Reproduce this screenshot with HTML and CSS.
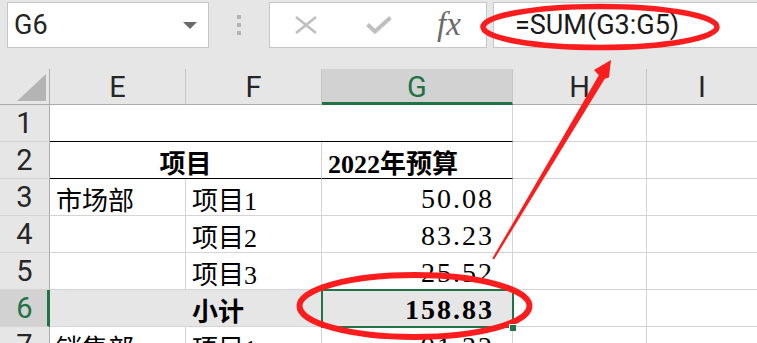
FILE: index.html
```html
<!DOCTYPE html>
<html lang="zh-CN">
  <head>
    <meta charset="UTF-8" />
    <title>G6 =SUM(G3:G5)</title>
    <link rel="stylesheet" href="styles.css">
  </head>
  <body>
    <div class="toolbar">
      <div class="namebox">
        <span>G6</span>
        <span class="caret"></span>
      </div>
      <div class="grip"><i></i><i></i><i></i></div>
      <div class="fxbox">
        <svg class="cancel" width="22" height="18" viewBox="0 0 22 18">
          <path d="M1 1 L21 17 M21 1 L1 17" stroke="#bfbfbf" stroke-width="2.6" fill="none" />
        </svg>
        <svg class="enter" width="26" height="18" viewBox="0 0 26 18">
          <path d="M1.5 8.5 L9 15.5 L24.5 1.5" stroke="#bfbfbf" stroke-width="4" fill="none" />
        </svg>
        <span class="fx">fx</span>
      </div>
      <div class="formula">=SUM(G3:G5)</div>
    </div>

    <div class="sheet">
      <div class="hd corner"><span class="tri"></span></div>
      <div class="hd">E</div>
      <div class="hd">F</div>
      <div class="hd sel">G</div>
      <div class="hd">H</div>
      <div class="hd last">I</div>

      <div class="rh">1</div>
      <div class="c span3 boxtop"></div>
      <div class="c"></div>
      <div class="c last"></div>

      <div class="rh">2</div>
      <div class="c span2 boxtop bold center">项目</div>
      <div class="c boxtop bold">2022年预算</div>
      <div class="c"></div>
      <div class="c last"></div>

      <div class="rh">3</div>
      <div class="c">市场部</div>
      <div class="c">项目1</div>
      <div class="c num">50.08</div>
      <div class="c"></div>
      <div class="c last"></div>

      <div class="rh">4</div>
      <div class="c"></div>
      <div class="c">项目2</div>
      <div class="c num">83.23</div>
      <div class="c"></div>
      <div class="c last"></div>

      <div class="rh">5</div>
      <div class="c"></div>
      <div class="c">项目3</div>
      <div class="c num">25.52</div>
      <div class="c"></div>
      <div class="c last"></div>

      <div class="rh sel">6</div>
      <div class="c sub joined"></div>
      <div class="c sub bold">小计</div>
      <div class="c sub num bold active">158.83</div>
      <div class="c"></div>
      <div class="c last"></div>

      <div class="rh">7</div>
      <div class="c">销售部</div>
      <div class="c">项目1</div>
      <div class="c num">91.32</div>
      <div class="c"></div>
      <div class="c last"></div>
    </div>

    <svg class="marks" width="757" height="343" viewBox="0 0 757 343">
      <ellipse cx="600" cy="27" rx="117" ry="20.5" fill="none" stroke="#fb1d1d" stroke-width="5.5" />
      <ellipse cx="414.5" cy="306" rx="115" ry="31" fill="none" stroke="#fb1d1d" stroke-width="6" />
      <polygon points="492.3,258.4 598.8,75.2 594,70 611,60 609,77.5 604.8,78.8 494,259.6" fill="#fb1d1d" />
    </svg>
  </body>
</html>
```

FILE: styles.css
```css
body {
  margin: 0;
  width: 757px;
  height: 343px;
  overflow: hidden;
  position: relative;
  background: #e6e6e6;
  font-family: Roboto, "Liberation Sans", sans-serif;
  color: #262626;
}
.toolbar {
  display: flex;
  align-items: center;
  height: 46px;
  padding: 2px 0 21px 7px;
}
.namebox {
  width: 202px;
  height: 46px;
  box-sizing: border-box;
  background: #fff;
  border: 1px solid #c6c6c6;
  display: flex;
  align-items: center;
  justify-content: space-between;
  padding: 0 11px 0 6px;
  font-size: 27px;
}
.caret {
  width: 0;
  height: 0;
  border-left: 7px solid transparent;
  border-right: 7px solid transparent;
  border-top: 7px solid #6a6a6a;
}
.grip {
  display: flex;
  flex-direction: column;
  gap: 4px;
  margin-left: 28px;
}
.grip i {
  width: 4px;
  height: 4px;
  background: #b3b3b3;
}
.fxbox {
  width: 218px;
  height: 46px;
  box-sizing: border-box;
  margin-left: 28px;
  background: #fff;
  border: 1px solid #c6c6c6;
  display: flex;
  align-items: center;
  padding-left: 25px;
}
.enter {
  margin-left: 49px;
}
.fx {
  margin-left: 45px;
  font-family: "Liberation Serif", serif;
  font-style: italic;
  font-size: 33px;
  color: #6a6a6a;
  line-height: 1;
  margin-bottom: 2px;
}
.formula {
  flex: 1;
  height: 46px;
  box-sizing: border-box;
  margin-left: 6px;
  background: #fff;
  border: 1px solid #c6c6c6;
  border-right: none;
  display: flex;
  align-items: center;
  padding-left: 21px;
  font-size: 27px;
  color: #1a1a1a;
}

.sheet {
  display: grid;
  grid-template-columns: 50px 136px 136px 191px 134px 110px;
  grid-template-rows: 36px repeat(7, 37px);
}
.sheet > div {
  box-sizing: border-box;
}
.hd {
  background: #e6e6e6;
  border-right: 1px solid #c6c6c6;
  border-bottom: 1px solid #ababab;
  display: flex;
  align-items: center;
  justify-content: center;
  font-size: 29px;
}
.hd.corner {
  border-right-color: #ababab;
  position: relative;
}
.tri {
  position: absolute;
  right: 3px;
  bottom: 3px;
  width: 0;
  height: 0;
  border-left: 29px solid transparent;
  border-bottom: 27px solid #b4b4b4;
}
.hd.sel {
  background: #d2d2d2;
  color: #217346;
  border-bottom: 3px solid #217346;
  padding-top: 3px;
}
.hd.last,
.c.last {
  border-right: none;
}
.rh {
  background: #e6e6e6;
  border-right: 1px solid #ababab;
  border-bottom: 1px solid #d4d4d4;
  display: flex;
  align-items: center;
  justify-content: center;
  font-size: 29px;
}
.rh.sel {
  background: #d2d2d2;
  color: #217346;
  border-right: 3px solid #217346;
  padding-left: 2px;
}
.c {
  background: #fff;
  border-right: 1px solid #d4d4d4;
  border-bottom: 1px solid #d4d4d4;
  display: flex;
  align-items: center;
  padding: 3px 6px 0;
  font-family: "Liberation Serif", "Noto Sans CJK SC", serif;
  font-size: 26px;
  color: #000;
  white-space: nowrap;
}
.span3 {
  grid-column: span 3;
}
.span2 {
  grid-column: span 2;
}
.boxtop {
  border-bottom-color: #000;
}
.center {
  justify-content: center;
}
.bold {
  font-weight: bold;
}
.num {
  justify-content: flex-end;
  padding-right: 18px;
  font-size: 28px;
  letter-spacing: 2px;
}
.sub {
  background: #e7e6e6;
}
.sub.joined {
  border-right-color: #e7e6e6;
}
.active {
  position: relative;
}
.active::after {
  content: "";
  position: absolute;
  top: -1px;
  left: -1px;
  right: -2px;
  bottom: -2px;
  border: 2px solid #217346;
}
.active::before {
  content: "";
  position: absolute;
  right: -4px;
  bottom: -5px;
  width: 6px;
  height: 6px;
  background: #217346;
  border-left: 1px solid #fff;
  border-top: 1px solid #fff;
  z-index: 1;
}
.marks {
  position: absolute;
  top: 0;
  left: 0;
  pointer-events: none;
}
```
